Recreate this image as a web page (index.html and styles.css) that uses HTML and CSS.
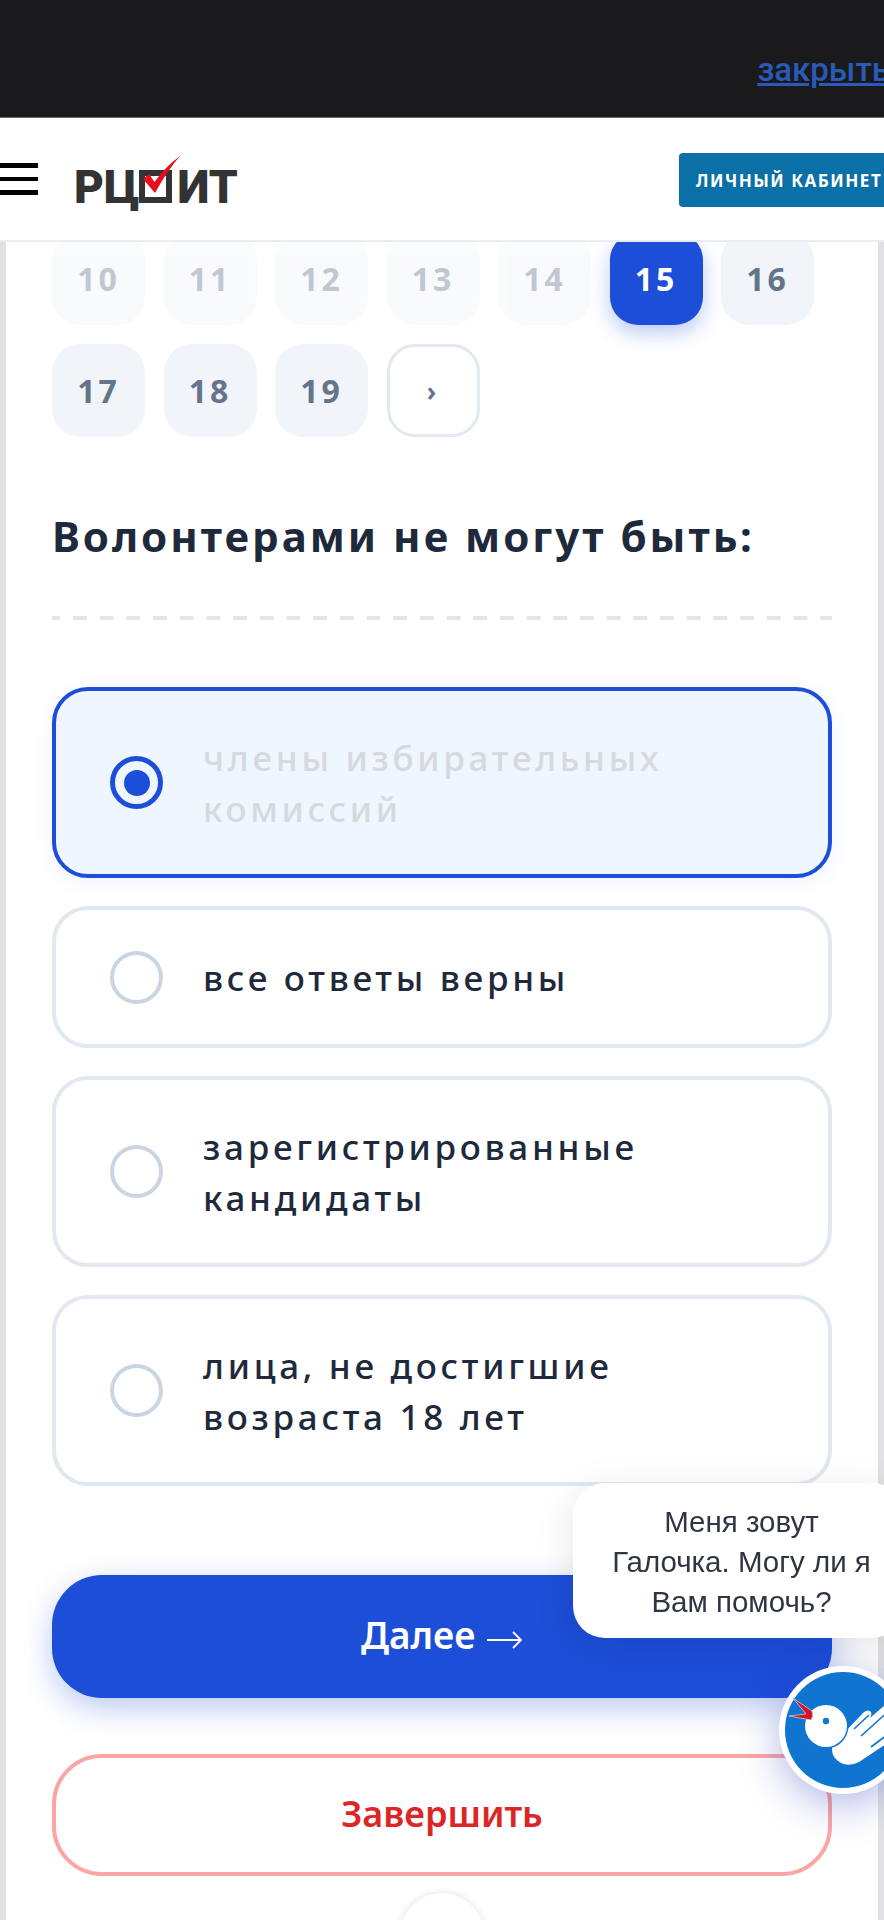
FILE: index.html
```html
<!DOCTYPE html>
<html lang="ru">
<head>
    <meta charset="UTF-8">
    <meta name="viewport" content="width=device-width, initial-scale=1.0">
    <title>РЦОИТ - Тест</title>
    <link rel="stylesheet" href="styles.css">
</head>
<body>
    <div class="top-bar">
        <a class="close-link" href="#">закрыть</a>
    </div>

    <div class="site-header">
        <div class="burger"><span></span><span></span><span></span></div>
        <div class="logo">
            <span>РЦ</span>
            <svg class="logo-mark" width="42" height="50" viewBox="0 0 42 50">
                <rect x="3" y="18" width="27" height="27" fill="none" stroke="#333" stroke-width="6"/>
                <path d="M4 24 L10 19 L15.500 27 Q26 12 41 1 Q28 16 16 38 Z" fill="#e3101b"/>
            </svg>
            <span>ИТ</span>
        </div>
        <button class="cabinet-btn">ЛИЧНЫЙ КАБИНЕТ</button>
    </div>

    <div class="card">
        <div class="pages">
            <div class="page-tile done">10</div>
            <div class="page-tile done">11</div>
            <div class="page-tile done">12</div>
            <div class="page-tile done">13</div>
            <div class="page-tile done">14</div>
            <div class="page-tile active">15</div>
            <div class="page-tile">16</div>
            <div class="page-tile">17</div>
            <div class="page-tile">18</div>
            <div class="page-tile">19</div>
            <div class="page-tile next">›</div>
        </div>

        <h2 class="question">Волонтерами не могут быть:</h2>
        <div class="divider"></div>

        <div class="options">
            <div class="option selected">
                <span class="radio"></span>
                <span class="option-text">члены избирательных комиссий</span>
            </div>
            <div class="option">
                <span class="radio"></span>
                <span class="option-text">все ответы верны</span>
            </div>
            <div class="option">
                <span class="radio"></span>
                <span class="option-text">зарегистрированные кандидаты</span>
            </div>
            <div class="option">
                <span class="radio"></span>
                <span class="option-text">лица, не достигшие возраста 18 лет</span>
            </div>
        </div>

        <button class="btn-next">
            Далее
            <svg class="arrow" width="36" height="20" viewBox="0 0 36 20">
                <path d="M0 10 H34 M26 2 L34 10 L26 18" fill="none" stroke="#fff" stroke-width="1.8"/>
            </svg>
        </button>
        <button class="btn-finish">Завершить</button>
        <div class="round-btn"></div>
    </div>

    <div class="chat-bubble">Меня зовут<br>Галочка. Могу ли я<br>Вам помочь?</div>

    <div class="helper">
        <svg width="128" height="128" viewBox="0 0 128 128">
            <clipPath id="badge"><circle cx="64" cy="64" r="58"/></clipPath>
            <circle cx="64" cy="64" r="58" fill="#0f75d1"/>
            <g clip-path="url(#badge)">
                <!-- hand -->
                <path d="M53 84 Q53 77 60 72 L85 46 Q89 43 92 46 Q93 49 91 52 L106 39 L128 20 V64 L80 96 Q70 101 62 97 Q53 92 53 84 Z" fill="#fff"/>
                <path d="M75 63 L90 49 M82 70 L112 43 M92 81 L112 66" fill="none" stroke="#0f75d1" stroke-width="1.6"/>
            </g>
            <!-- head -->
            <circle cx="47" cy="60" r="22.5" fill="#0f75d1"/>
            <circle cx="47" cy="60" r="21" fill="#fff"/>
            <circle cx="47" cy="55" r="3.2" fill="#0f75d1"/>
            <path d="M14 32 L33 45 Q35 50 32 54 L10 50 L27 48 Z" fill="#d4161f" stroke="#c9ced8" stroke-width="0.8"/>
        </svg>
    </div>
</body>
</html>
```

FILE: styles.css
```css
html, body {
    margin: 0;
    height: 1920px;
    overflow: hidden;
}
body {
    font-family: "Noto Sans", Arial, sans-serif;
    background-color: #e1e1e3;
}
button {
    font-family: inherit;
    cursor: pointer;
}

.top-bar {
    height: 117px;
    background-color: #1a1a1c;
    border-bottom: 1px solid #6b6b6e;
    display: flex;
    justify-content: flex-end;
    align-items: flex-end;
    overflow: hidden;
}
.close-link {
    font-family: Roboto, sans-serif;
    font-size: 33px;
    font-weight: 500;
    line-height: 40px;
    margin: 0 -6px 27px 0;
    color: #2a5ab8;
    text-decoration-thickness: 3px;
}

.site-header {
    position: relative;
    z-index: 2;
    height: 122px;
    background: white;
    border-bottom: 2px solid #ebecee;
    display: flex;
    align-items: center;
    overflow: hidden;
}
.burger {
    width: 38px;
    display: flex;
    flex-direction: column;
    gap: 9px;
    margin-right: 36px;
}
.burger span {
    display: block;
    height: 4.5px;
    background: #000;
}
.logo {
    display: flex;
    align-items: flex-start;
    height: 50px;
    margin-top: 1px;
    font-family: Roboto, sans-serif;
    font-weight: 900;
    font-size: 46px;
    line-height: 50px;
    color: #333;
}
.logo span {
    display: block;
    margin-top: 7px;
}
.logo-mark {
    display: block;
    margin-right: -4px;
}
.cabinet-btn {
    margin-left: auto;
    margin-right: -20px;
    margin-top: 2px;
    width: 225px;
    height: 54px;
    flex-shrink: 0;
    text-align: left;
    padding: 0 0 0 17px;
    background-color: #0b70a8;
    color: white;
    border: none;
    border-radius: 4px;
    font-size: 17px;
    font-weight: 700;
    letter-spacing: 1.5px;
    white-space: nowrap;
}

.card {
    margin: -10px 6px 0;
    padding: 0 46px;
    background: white;
    height: 1700px;
}

.pages {
    display: flex;
    flex-wrap: wrap;
    gap: 19px 18.5px;
}
.page-tile {
    width: 93px;
    height: 93px;
    box-sizing: border-box;
    border-radius: 28px;
    background-color: #f1f5f9;
    color: #64748b;
    font-size: 32px;
    font-weight: 700;
    letter-spacing: 3px;
    display: flex;
    align-items: center;
    justify-content: center;
}
.page-tile.done {
    opacity: 0.4;
}
.page-tile.active {
    background-color: #1d4ed8;
    color: white;
    box-shadow: 0 8px 20px rgba(29,78,216,0.3);
}
.page-tile.next {
    background: white;
    border: 3px solid #e2e8f0;
    font-size: 26px;
}

.question {
    margin: 71.400px 0 0;
    font-size: 42px;
    line-height: 56px;
    font-weight: 700;
    letter-spacing: 3px;
    color: #1e293b;
}
.divider {
    margin-top: 52px;
    height: 4px;
    background: linear-gradient(to right, #e2e5ea 50%, transparent 50%) 21px 0 / 26.7px 4px repeat-x;
}

.options {
    margin-top: 67px;
    display: flex;
    flex-direction: column;
    gap: 28px;
}
.option {
    display: flex;
    align-items: center;
    gap: 40px;
    box-sizing: border-box;
    min-height: 142px;
    padding: 40.5px 54px;
    border: 4px solid #e2e8f0;
    border-radius: 36px;
    background: white;
}
.radio {
    width: 53px;
    height: 53px;
    flex-shrink: 0;
    box-sizing: border-box;
    border: 4px solid #cbd5e1;
    border-radius: 50%;
    display: flex;
    align-items: center;
    justify-content: center;
}
.option-text {
    font-size: 35px;
    line-height: 51px;
    font-weight: 500;
    letter-spacing: 3.7px;
    color: #1e293b;
}
.option.selected {
    border-color: #1d4ed8;
    background-color: #eff6ff;
    box-shadow: 0 4px 20px rgba(29,78,216,0.07);
}
.option.selected .radio {
    border: 5px solid #1d4ed8;
}
.option.selected .radio::after {
    content: "";
    width: 26px;
    height: 26px;
    border-radius: 50%;
    background: #1d4ed8;
}
.option.selected .option-text {
    color: #d6d9de;
}

.btn-next, .btn-finish {
    display: block;
    width: 100%;
    box-sizing: border-box;
    border-radius: 50px;
    font-size: 36px;
    font-weight: 600;
    padding: 0 0 4px;
}
.btn-next {
    margin-top: 89px;
    height: 123px;
    border: none;
    background-color: #1d4ed8;
    color: white;
    font-size: 37px;
    box-shadow: 0 10px 30px rgba(29,78,216,0.3);
}
.arrow {
    margin-left: 2px;
    vertical-align: -1px;
}
.btn-finish {
    margin-top: 56px;
    height: 122px;
    border: 4px solid #fca5a5;
    background: white;
    color: #dc2626;
}
.round-btn {
    width: 84px;
    height: 84px;
    margin: 17px auto 0;
    border-radius: 50%;
    background: white;
    box-shadow: 0 0 8px rgba(0,0,0,0.12);
}

/* floating helper */
.chat-bubble {
    position: fixed;
    top: 1483px;
    right: -20px;
    width: 331px;
    height: 155px;
    box-sizing: border-box;
    padding: 19px 0 0 6px;
    border-radius: 32px;
    background: white;
    box-shadow: 0 8px 40px rgba(0,0,0,0.1);
    font-family: "Liberation Sans", Arial, sans-serif;
    font-size: 29.500px;
    line-height: 40px;
    text-align: center;
    color: #2f3542;
    z-index: 3;
}
.helper {
    position: fixed;
    top: 1666px;
    left: 779px;
    width: 128px;
    height: 128px;
    border-radius: 50%;
    background: white;
    box-shadow: 0 10px 40px rgba(29,50,180,0.35);
    z-index: 4;
}
.helper svg {
    display: block;
}
```
